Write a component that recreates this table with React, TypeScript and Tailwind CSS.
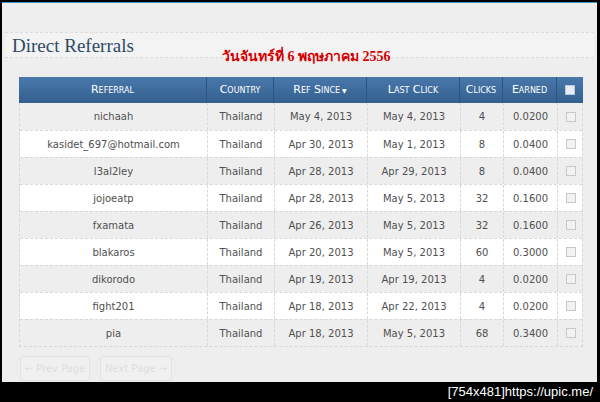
import React from 'react';

interface Referral {
    name: string;
    country: string;
    since: string;
    lastClick: string;
    clicks: number;
    earned: string;
}

const referrals: Referral[] = [
    { name: 'nichaah', country: 'Thailand', since: 'May 4, 2013', lastClick: 'May 4, 2013', clicks: 4, earned: '0.0200' },
    { name: 'kasidet_697@hotmail.com', country: 'Thailand', since: 'Apr 30, 2013', lastClick: 'May 1, 2013', clicks: 8, earned: '0.0400' },
    { name: 'l3al2ley', country: 'Thailand', since: 'Apr 28, 2013', lastClick: 'Apr 29, 2013', clicks: 8, earned: '0.0400' },
    { name: 'jojoeatp', country: 'Thailand', since: 'Apr 28, 2013', lastClick: 'May 5, 2013', clicks: 32, earned: '0.1600' },
    { name: 'fxamata', country: 'Thailand', since: 'Apr 26, 2013', lastClick: 'May 5, 2013', clicks: 32, earned: '0.1600' },
    { name: 'blakaros', country: 'Thailand', since: 'Apr 20, 2013', lastClick: 'May 5, 2013', clicks: 60, earned: '0.3000' },
    { name: 'dikorodo', country: 'Thailand', since: 'Apr 19, 2013', lastClick: 'Apr 19, 2013', clicks: 4, earned: '0.0200' },
    { name: 'fight201', country: 'Thailand', since: 'Apr 18, 2013', lastClick: 'Apr 22, 2013', clicks: 4, earned: '0.0200' },
    { name: 'pia', country: 'Thailand', since: 'Apr 18, 2013', lastClick: 'May 5, 2013', clicks: 68, earned: '0.3400' },
];

// column template shared by header and rows
const cols = 'grid grid-cols-[187px_67px_93px_93px_43px_54px_27px]';

const HeadCell = ({ children, first }: { children: React.ReactNode; first?: boolean }) => (
    <div className={`flex items-center justify-center ${first ? '' : 'border-l border-[#2d5584]'}`}>
        {children}
    </div>
);

const Cell = ({ children, first }: { children: React.ReactNode; first?: boolean }) => (
    <div className={`flex items-center justify-center ${first ? '' : 'border-l border-dashed border-[#d8d8d8]'}`}>
        {children}
    </div>
);

const App: React.FC = () => {
    return (
        <div className="w-[600px] h-[402px] bg-black flex flex-col overflow-hidden">
            {/* screenshot frame */}
            <div className="flex-1 flex flex-col bg-[#eeeeee] ml-[2px] mr-[3px] mt-[2px] border-t border-[#3d93c6]">
                <div className="h-[29px]" />

                {/* title strip */}
                <div className="relative h-[26px] mx-[3px] bg-[#f3f3f3] border-y border-dashed border-[#dcdcdc] flex items-end pl-[7px] pb-[2px]">
                    <h1 className="text-[19px] leading-none text-[#2f4a66] font-['Liberation_Serif',serif]">Direct Referrals</h1>
                    <span className="absolute left-[217px] top-[17px] text-[14px] font-bold text-[#d40000] leading-none whitespace-nowrap font-['Liberation_Serif','Noto_Sans',serif]">
                        วันจันทร์ที่ 6 พฤษภาคม 2556
                    </span>
                </div>

                {/* referrals table */}
                <div className="ml-[17px] mt-[19px] w-[564px] font-['DejaVu_Sans',sans-serif]">
                    <div className={`${cols} h-[26px] bg-gradient-to-b from-[#4a78ab] to-[#33608f] text-white text-[11px] [font-variant:small-caps]`}>
                        <HeadCell first>Referral</HeadCell>
                        <HeadCell>Country</HeadCell>
                        <HeadCell>Ref Since <span className="ml-[2px] text-[6px]">▼</span></HeadCell>
                        <HeadCell>Last Click</HeadCell>
                        <HeadCell>Clicks</HeadCell>
                        <HeadCell>Earned</HeadCell>
                        <HeadCell>
                            <span className="w-[10px] h-[10px] bg-[#e8edf3] border border-[#b9c6d6]" />
                        </HeadCell>
                    </div>
                    <div className="border-l border-r border-b border-dashed border-[#d8d8d8]">
                        {referrals.map((r, i) => (
                            <div
                                key={r.name}
                                className={`${cols} h-[27px] text-[10px] text-[#505050] ${i % 2 === 0 ? 'bg-[#eeeeee]' : 'bg-white'} ${i > 0 ? 'border-t border-dashed border-[#d8d8d8]' : ''}`}
                            >
                                <Cell first>{r.name}</Cell>
                                <Cell>{r.country}</Cell>
                                <Cell>{r.since}</Cell>
                                <Cell>{r.lastClick}</Cell>
                                <Cell>{r.clicks}</Cell>
                                <Cell>{r.earned}</Cell>
                                <Cell>
                                    <span className="w-[10px] h-[10px] bg-[#f2f2f2] border border-[#c8c8c8]" />
                                </Cell>
                            </div>
                        ))}
                    </div>
                </div>

                {/* pagination */}
                <div className="flex gap-[10px] ml-[18px] mt-[9px] font-['DejaVu_Sans',sans-serif] text-[10px] text-[#dedede]">
                    <button className="w-[70px] h-[25px] rounded-[3px] border border-[#e3e3e3] bg-[#f0f0f0]">← Prev Page</button>
                    <button className="w-[72px] h-[25px] rounded-[3px] border border-[#e3e3e3] bg-[#f0f0f0]">Next Page →</button>
                </div>
            </div>

            {/* image host caption */}
            <div className="h-[20px] flex items-center justify-end pr-[7px] text-white text-[13px] font-['Liberation_Sans_Narrow','Liberation_Sans',sans-serif]">
                [754x481]https://upic.me/
            </div>
        </div>
    );
};

export default App;
